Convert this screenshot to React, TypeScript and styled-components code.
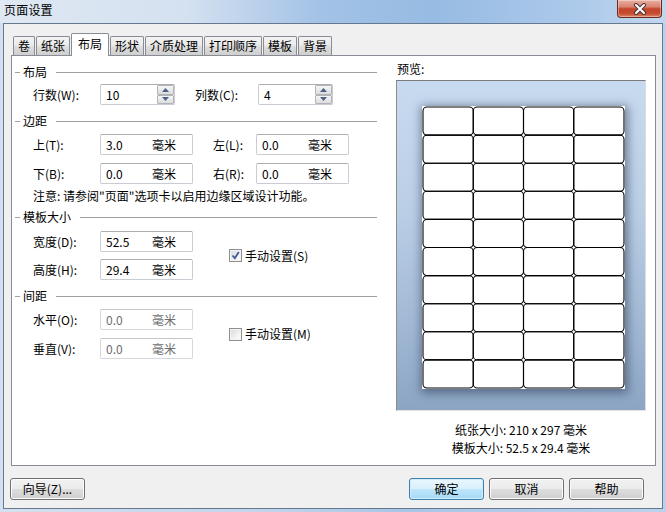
import React from 'react';
import styled, { createGlobalStyle } from 'styled-components';

const GlobalStyle = createGlobalStyle`
  html, body {
    margin: 0;
    padding: 0;
    background: #bcd1e9;
  }
  body {
    font-family: "Noto Sans CJK SC", "Noto Sans", sans-serif;
    font-size: 12px;
    color: #000;
  }
  * {
    box-sizing: border-box;
  }
`;

const tabs = ['卷', '纸张', '布局', '形状', '介质处理', '打印顺序', '模板', '背景'];

const Window = styled.div`
  width: 666px;
  height: 512px;
  display: flex;
  flex-direction: column;
  overflow: hidden;
  background: linear-gradient(90deg, #d3e0ef 0%, #c2d5eb 40%, #a9c5e6 60%, #bcd2ec 100%);
`;

const TitleBar = styled.div`
  height: 23px;
  flex: none;
  display: flex;
  justify-content: space-between;
  align-items: flex-start;
  padding: 0 4px;
  background: linear-gradient(90deg, #dfe8f3 0%, #d4e1f0 28%, #a3c2e6 48%, #97bbe3 65%, #aac8ea 85%, #c2d6ee 100%);
`;

const Title = styled.div`
  padding-top: 2px;
  line-height: 16px;
  font-size: 12px;
  letter-spacing: 0.2px;
`;

const CloseButton = styled.div`
  width: 45px;
  height: 18px;
  border: 1px solid #6b2a20;
  border-top: none;
  border-radius: 0 0 4px 4px;
  display: flex;
  align-items: center;
  justify-content: center;
  background: linear-gradient(#eab0a2 0%, #d98270 40%, #c4452c 52%, #c64a2e 78%, #dc8366 100%);
  box-shadow: inset 0 0 0 1px rgba(255, 255, 255, 0.35);
`;

const Body = styled.div`
  flex: 1;
  margin: 0 3px 3px 3px;
  border: 1px solid #66788f;
  background: #f0f0f0;
  padding: 9px 6px 0 7px;
  display: flex;
  flex-direction: column;
`;

const TabStrip = styled.div`
  height: 22px;
  display: flex;
  align-items: flex-end;
  padding-left: 2px;
`;

const Tab = styled.div<{ $active?: boolean }>`
  position: relative;
  z-index: ${(p) => (p.$active ? 1 : 0)};
  height: ${(p) => (p.$active ? 23 : 19)}px;
  margin-bottom: ${(p) => (p.$active ? -1 : 0)}px;
  margin-right: 1px;
  padding: ${(p) => (p.$active ? '0 6px 2px' : '0 4px')};
  display: flex;
  align-items: center;
  border: 1px solid #898c95;
  border-bottom: none;
  border-radius: 2px 2px 0 0;
  line-height: 16px;
  background: ${(p) =>
    p.$active ? '#fff' : 'linear-gradient(#f3f3f3 0%, #ebebeb 45%, #dddddd 55%, #cfcfcf 100%)'};
`;

const Pane = styled.div`
  height: 411px;
  border: 1px solid #898c95;
  background: #fff;
  display: flex;
  padding: 0 8px 0 3px;
`;

const LeftColumn = styled.div`
  width: 362px;
  flex: none;
  padding-top: 8px;
`;

const GroupHeader = styled.div<{ $mt?: number }>`
  display: flex;
  align-items: center;
  height: 16px;
  line-height: 16px;
  margin-top: ${(p) => p.$mt ?? 0}px;

  &::before {
    content: '';
    width: 5px;
    height: 1px;
    margin-right: 3px;
    background: #a0a0a0;
  }
  &::after {
    content: '';
    flex: 1;
    height: 1px;
    margin-left: 9px;
    background: #a0a0a0;
  }
`;

const FieldRow = styled.div<{ $mt?: number }>`
  display: flex;
  align-items: center;
  height: 21px;
  margin-top: ${(p) => p.$mt ?? 0}px;
  padding-left: 18px;
`;

const FieldLabel = styled.span<{ $w: number; $ml?: number }>`
  flex: none;
  width: ${(p) => p.$w}px;
  margin-left: ${(p) => p.$ml ?? 0}px;
  line-height: 16px;
`;

const SpinBox = styled.div`
  width: 75px;
  height: 21px;
  display: flex;
  border: 1px solid #c9ccd3;
  border-top-color: #abadb3;
  border-radius: 2px;
  background: #fff;
`;

const SpinValue = styled.span`
  flex: 1;
  padding-left: 5px;
  line-height: 19px;
`;

const SpinButtons = styled.div`
  width: 17px;
  display: flex;
  flex-direction: column;
`;

const SpinButton = styled.div`
  flex: 1;
  display: flex;
  align-items: center;
  justify-content: center;
  border: 1px solid #b2b4b8;
  border-radius: 1px;
  background: linear-gradient(#f6f6f6, #dcdcdc);
`;

const MeasureBox = styled.div<{ $disabled?: boolean }>`
  width: 93px;
  height: 21px;
  display: flex;
  align-items: center;
  padding-left: 5px;
  border: 1px solid ${(p) => (p.$disabled ? '#d5d8dd' : '#c9ccd3')};
  border-top-color: ${(p) => (p.$disabled ? '#c3c6cc' : '#abadb3')};
  border-radius: 2px;
  background: #fff;
  color: ${(p) => (p.$disabled ? '#6d6d6d' : '#000')};
  line-height: 16px;
`;

const MeasureValue = styled.span`
  width: 46px;
  flex: none;
`;

const Note = styled.div`
  margin-top: 4px;
  height: 16px;
  line-height: 16px;
  padding-left: 18px;
`;

const SplitBlock = styled.div<{ $mt: number }>`
  display: flex;
  align-items: center;
  margin-top: ${(p) => p.$mt}px;
`;

const CheckLabel = styled.label`
  display: flex;
  align-items: center;
  gap: 3px;
  margin-left: 36px;
  line-height: 16px;
`;

const CheckSquare = styled.span`
  width: 13px;
  height: 13px;
  flex: none;
  display: flex;
  align-items: center;
  justify-content: center;
  border: 1px solid #8e8f8f;
  background: linear-gradient(135deg, #d4d6d9 0%, #f2f2f2 60%, #fbfbfb 100%);
  box-shadow: inset 0 0 0 1px #f4f4f4;
`;

const PreviewColumn = styled.div`
  width: 250px;
  flex: none;
  margin-left: 19px;
  display: flex;
  flex-direction: column;
`;

const PreviewLabel = styled.div`
  margin-top: 5px;
  padding-left: 1px;
  line-height: 16px;
`;

const PreviewBox = styled.div`
  margin-top: 3px;
  height: 331px;
  border: 1px solid;
  border-color: #7b7b7b #dcdcdc #e4e4e4 #8d8d8d;
  background: linear-gradient(#c8daef 0%, #bacee6 40%, #a1b8d4 75%, #8ba5c3 100%);
  padding: 25px 0 0 25px;
`;

const Paper = styled.div`
  width: 203px;
  height: 283px;
  background: #fff;
  box-shadow: 1px 2px 9px 2px rgba(40, 55, 80, 0.55);
`;

const SizeInfo = styled.div`
  margin-top: 10px;
  text-align: center;
  line-height: 18px;
`;

const ButtonBar = styled.div`
  display: flex;
  gap: 5px;
  margin-top: 12px;
  margin-left: -1px;
  padding-right: 12px;
`;

const Spacer = styled.div`
  flex: 1;
`;

const Button = styled.button<{ $default?: boolean }>`
  width: 75px;
  height: 22px;
  padding: 0;
  font: inherit;
  color: #000;
  border: 1px solid ${(p) => (p.$default ? '#3c7fb1' : '#707070')};
  border-radius: 3px;
  background: ${(p) =>
    p.$default
      ? 'linear-gradient(#eaf6fd 0%, #d9f0fc 48%, #bee6fd 52%, #a7d9f5 100%)'
      : 'linear-gradient(#f2f2f2 0%, #ebebeb 48%, #dddddd 52%, #cfcfcf 100%)'};
  box-shadow: inset 0 0 0 1px ${(p) => (p.$default ? '#d2ecfa' : '#fcfcfc')};
  line-height: 18px;
`;

const Arrow = ({ up }: { up?: boolean }) => (
  <svg width="7" height="4" viewBox="0 0 7 4">
    <polygon points={up ? '3.5,0 7,4 0,4' : '0,0 7,0 3.5,4'} fill="#4d6185" />
  </svg>
);

const Spin = ({ value }: { value: string }) => (
  <SpinBox>
    <SpinValue>{value}</SpinValue>
    <SpinButtons>
      <SpinButton>
        <Arrow up />
      </SpinButton>
      <SpinButton>
        <Arrow />
      </SpinButton>
    </SpinButtons>
  </SpinBox>
);

const Measure = ({ value, disabled }: { value: string; disabled?: boolean }) => (
  <MeasureBox $disabled={disabled}>
    <MeasureValue>{value}</MeasureValue>
    <span>毫米</span>
  </MeasureBox>
);

const Check = ({ checked, label }: { checked?: boolean; label: string }) => (
  <CheckLabel>
    <CheckSquare>
      {checked && (
        <svg width="9" height="9" viewBox="0 0 9 9">
          <path d="M1.5 4.5 L3.8 7.2 L7.8 1" fill="none" stroke="#3d5a94" strokeWidth="1.8" />
        </svg>
      )}
    </CheckSquare>
    {label}
  </CheckLabel>
);

const LabelSheet = () => {
  const cols = 4;
  const rows = 10;
  const w = 201 / cols;
  const h = 281 / rows;
  const cells = [];
  for (let r = 0; r < rows; r++) {
    for (let c = 0; c < cols; c++) {
      cells.push(
        <rect
          key={`${r}-${c}`}
          x={1 + c * w}
          y={1 + r * h}
          width={w}
          height={h}
          rx="4"
          fill="none"
          stroke="#000"
          strokeWidth="1.1"
        />,
      );
    }
  }
  return (
    <svg width="203" height="283" viewBox="0 0 203 283">
      {cells}
    </svg>
  );
};

const App = () => {
  return (
    <>
      <GlobalStyle />
      <Window>
        <TitleBar>
          <Title>页面设置</Title>
          <CloseButton>
            <svg width="14" height="12" viewBox="0 0 14 12">
              <path d="M3 2 L11 10 M11 2 L3 10" stroke="#4a3a38" strokeWidth="4" strokeLinecap="round" />
              <path d="M3 2 L11 10 M11 2 L3 10" stroke="#fff" strokeWidth="2" strokeLinecap="round" />
            </svg>
          </CloseButton>
        </TitleBar>
        <Body>
          <TabStrip>
            {tabs.map((t) => (
              <Tab key={t} $active={t === '布局'}>
                {t}
              </Tab>
            ))}
          </TabStrip>
          <Pane>
            <LeftColumn>
              <GroupHeader>布局</GroupHeader>
              <FieldRow $mt={4}>
                <FieldLabel $w={67}>行数(W):</FieldLabel>
                <Spin value="10" />
                <FieldLabel $w={63} $ml={20}>
                  列数(C):
                </FieldLabel>
                <Spin value="4" />
              </FieldRow>

              <GroupHeader $mt={8}>边距</GroupHeader>
              <FieldRow $mt={5}>
                <FieldLabel $w={67}>上(T):</FieldLabel>
                <Measure value="3.0" />
                <FieldLabel $w={43} $ml={20}>
                  左(L):
                </FieldLabel>
                <Measure value="0.0" />
              </FieldRow>
              <FieldRow $mt={8}>
                <FieldLabel $w={67}>下(B):</FieldLabel>
                <Measure value="0.0" />
                <FieldLabel $w={43} $ml={20}>
                  右(R):
                </FieldLabel>
                <Measure value="0.0" />
              </FieldRow>
              <Note>注意: 请参阅"页面"选项卡以启用边缘区域设计功能。</Note>

              <GroupHeader $mt={5}>模板大小</GroupHeader>
              <SplitBlock $mt={6}>
                <div>
                  <FieldRow>
                    <FieldLabel $w={67}>宽度(D):</FieldLabel>
                    <Measure value="52.5" />
                  </FieldRow>
                  <FieldRow $mt={7}>
                    <FieldLabel $w={67}>高度(H):</FieldLabel>
                    <Measure value="29.4" />
                  </FieldRow>
                </div>
                <Check checked label="手动设置(S)" />
              </SplitBlock>

              <GroupHeader $mt={8}>间距</GroupHeader>
              <SplitBlock $mt={5}>
                <div>
                  <FieldRow>
                    <FieldLabel $w={67}>水平(O):</FieldLabel>
                    <Measure value="0.0" disabled />
                  </FieldRow>
                  <FieldRow $mt={8}>
                    <FieldLabel $w={67}>垂直(V):</FieldLabel>
                    <Measure value="0.0" disabled />
                  </FieldRow>
                </div>
                <Check label="手动设置(M)" />
              </SplitBlock>
            </LeftColumn>

            <PreviewColumn>
              <PreviewLabel>预览:</PreviewLabel>
              <PreviewBox>
                <Paper>
                  <LabelSheet />
                </Paper>
              </PreviewBox>
              <SizeInfo>
                <div>纸张大小: 210 x 297 毫米</div>
                <div>模板大小: 52.5 x 29.4 毫米</div>
              </SizeInfo>
            </PreviewColumn>
          </Pane>
          <ButtonBar>
            <Button>向导(Z)...</Button>
            <Spacer />
            <Button $default>确定</Button>
            <Button>取消</Button>
            <Button>帮助</Button>
          </ButtonBar>
        </Body>
      </Window>
    </>
  );
};

export default App;
